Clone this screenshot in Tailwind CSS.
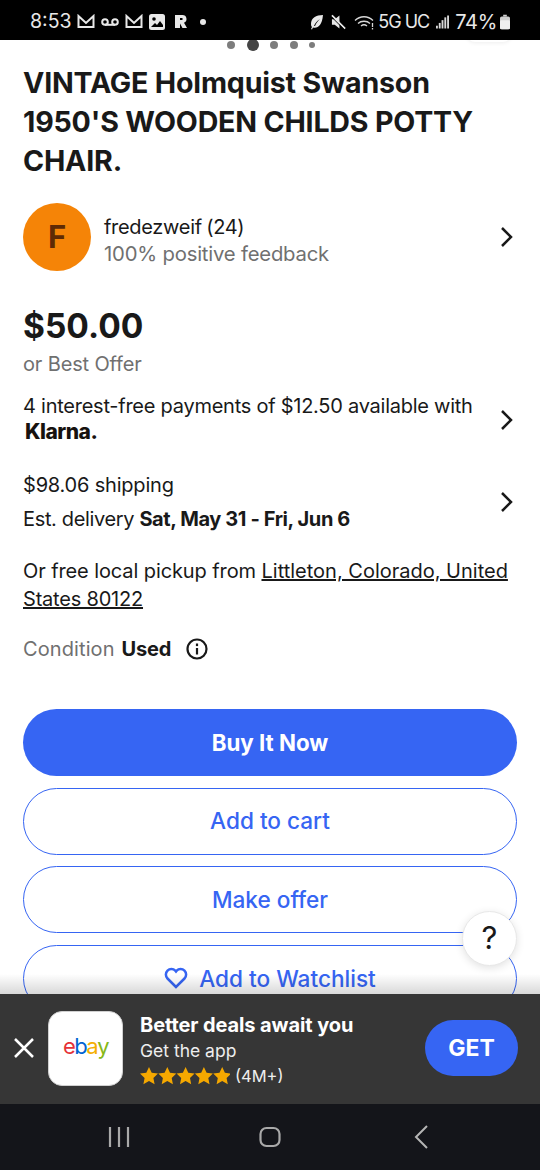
<!DOCTYPE html>
<html lang="en">
<head>
  <meta charset="UTF-8">
  <title>eBay listing</title>
  <script src="https://cdn.jsdelivr.net/npm/@tailwindcss/browser@4"></script>
</head>
<body class="bg-white">
<div class="w-[540px] h-[1170px] overflow-hidden flex flex-col font-['Inter','Liberation_Sans',sans-serif] text-[#191919]">

  <!-- Status bar -->
  <div class="relative z-10 h-[40px] shrink-0 bg-black text-[#e8e8e8] flex items-center pt-[3px] pl-[30px] pr-[30px] text-[20px]">
    <span class="w-[47px] text-[19.500px]">8:53</span>
    <div class="flex items-center gap-[6px]">
      <svg width="18" height="15" viewBox="0 0 18 15" fill="none" stroke="#e8e8e8" stroke-width="2"><path d="M1.500 13V2L9 9l7.500-7v11z"/></svg>
      <svg width="18" height="10" viewBox="0 0 18 10" fill="none" stroke="#e8e8e8" stroke-width="2"><circle cx="4" cy="5" r="2.800"/><circle cx="14" cy="5" r="2.800"/><path d="M4 7.800h10"/></svg>
      <svg width="18" height="15" viewBox="0 0 18 15" fill="none" stroke="#e8e8e8" stroke-width="2"><path d="M1.500 13V2L9 9l7.500-7v11z"/></svg>
      <svg width="16" height="16" viewBox="0 0 16 16"><rect width="16" height="16" rx="2.500" fill="#e8e8e8"/><circle cx="5" cy="5" r="1.800" fill="#000"/><path d="M2 13l4-4 2 2 3-4 3 4v2H2z" fill="#000"/></svg>
      <svg class="ml-[3px]" width="14" height="15" viewBox="0 0 14 15"><path d="M1 1h7.500a4 4 0 0 1 1.500 7.700L13 14H8.500L6 9.500V14H1z" fill="#e8e8e8"/><rect x="6" y="4" width="2.500" height="2" fill="#000"/></svg>
      <span class="ml-[6px] w-[6px] h-[6px] rounded-full bg-[#e8e8e8]"></span>
    </div>
    <div class="ml-auto flex items-center">
      <svg width="14" height="16" viewBox="0 0 14 16"><path d="M13 1C6 1 1 4 1 10c0 1.500.5 2.500 1 3l-1 2 1 .5 1-2c5 1 9-2 10-12.500zM4 12c1-3 3-5 6-7-2 2-4 4-5 7z" fill="#e8e8e8" fill-rule="evenodd"/></svg>
      <svg class="ml-[7px]" width="15" height="16" viewBox="0 0 16 16"><path d="M1 5h3l5-4v14l-5-4H1z" fill="#e8e8e8"/><path d="M1 1l14 14" stroke="#e8e8e8" stroke-width="2"/><path d="M0 2l14 14" stroke="#000" stroke-width="1"/></svg>
      <svg class="ml-[8px]" width="20" height="16" viewBox="0 0 20 16" fill="none" stroke="#d8d8d8" stroke-width="1.300"><path d="M1 6.500C6 1.500 14 1.500 19 6.500"/><path d="M4 9.500c3-3 9-3 12 0"/><path d="M7 12c1.800-1.500 4.200-1.500 6 0"/><path d="M18.500 9v4M18.500 14v1.500"/></svg>
      <span class="ml-[4px] text-[18px] tracking-[-1px]">5G</span>
      <span class="ml-[4px] text-[18px] tracking-[-1px]">UC</span>
      <svg class="ml-[7px]" width="13" height="14" viewBox="0 0 14 14" fill="#d8d8d8"><rect x="0" y="11" width="2" height="3"/><rect x="3" y="8" width="2" height="6"/><rect x="6" y="5" width="2" height="9"/><rect x="9" y="2" width="2" height="12"/><rect x="12" y="0" width="2" height="14"/></svg>
      <span class="ml-[6px] tracking-[-0.3px]">74%</span>
      <svg class="ml-[3px]" width="10" height="16" viewBox="0 0 11 16"><rect x="3.500" y="0" width="4" height="2" fill="#cfcfcf"/><rect x="0" y="2" width="11" height="14" rx="2" fill="#cfcfcf"/><rect x="0" y="6" width="11" height="10" rx="1.500" fill="#efefef"/></svg>
    </div>
  </div>

  <!-- Listing -->
  <div class="relative flex-1 min-h-0 overflow-hidden px-[23px]">
    <!-- shadow of a button that has scrolled under the status bar -->
    <div class="absolute left-[467px] top-[-14px] w-[44px] h-[16px] rounded-full shadow-[0_1px_4px_rgba(0,0,0,0.07)]"></div>

    <div class="flex justify-center items-center gap-[11.500px] h-[10px] mb-[1px] pl-[2px]">
      <span class="w-[8px] h-[8px] rounded-full bg-[#7d7d7d]"></span>
      <span class="w-[12px] h-[12px] rounded-full bg-[#444]"></span>
      <span class="w-[8px] h-[8px] rounded-full bg-[#7d7d7d]"></span>
      <span class="w-[8px] h-[8px] rounded-full bg-[#7d7d7d]"></span>
      <span class="w-[6px] h-[6px] rounded-full bg-[#7d7d7d]"></span>
    </div>

    <h1 class="mt-[13px] text-[28.600px] leading-[39px] font-bold tracking-[-0.2px]">VINTAGE Holmquist Swanson 1950'S WOODEN CHILDS POTTY CHAIR.</h1>

    <div class="mt-[23px] flex items-center">
      <div class="w-[68px] h-[68px] rounded-full bg-[#f58407] text-[#5e2a05] flex items-center justify-center text-[31px] font-bold">F</div>
      <div class="ml-[13px] pt-[6px] text-[20.300px] tracking-[-0.2px]">
        <div class="text-[20px] leading-[27px] tracking-[-0.300px] [word-spacing:-1px]">fredezweif (24)</div>
        <div class="leading-[26px] text-[#707070]">100% positive feedback</div>
      </div>
      <svg class="ml-auto mr-[3px]" width="14" height="22" viewBox="0 0 14 22" fill="none" stroke="#191919" stroke-width="2.500"><path d="M2 2l9 9-9 9"/></svg>
    </div>

    <div class="mt-[32px] text-[33.500px] leading-[46px] font-bold">$50.00</div>
    <div class="mt-[1px] text-[20px] leading-[28px] text-[#707070] tracking-[-0.150px]">or Best Offer</div>

    <div class="mt-[14px] flex items-center">
      <div>
        <div class="text-[20px] leading-[28px] tracking-[-0.250px]">4 interest-free payments of $12.50 available with</div>
        <div class="mt-[-2px] pl-[2px] text-[21px] leading-[28px] font-extrabold tracking-[-0.5px] text-[#17120f]">Klarna.</div>
      </div>
      <svg class="ml-auto mr-[3px] mt-[2px]" width="14" height="22" viewBox="0 0 14 22" fill="none" stroke="#191919" stroke-width="2.500"><path d="M2 2l9 9-9 9"/></svg>
    </div>

    <div class="mt-[25px] flex items-center">
      <div class="text-[20px] tracking-[-0.2px]">
        <div class="leading-[28px]">$98.06 shipping</div>
        <div class="mt-[6px] leading-[28px] tracking-[-0.350px]">Est. delivery <span class="font-bold tracking-[-0.400px]">Sat, May 31 - Fri, Jun 6</span></div>
      </div>
      <svg class="ml-auto mr-[3px]" width="14" height="22" viewBox="0 0 14 22" fill="none" stroke="#191919" stroke-width="2.500"><path d="M2 2l9 9-9 9"/></svg>
    </div>

    <div class="mt-[24px] text-[20px] leading-[28px] tracking-[-0.100px]">
      <div>Or free local pickup from <span class="underline tracking-[0px]">Littleton, Colorado, United</span></div>
      <div><span class="underline tracking-[-0.2px]">States 80122</span></div>
    </div>

    <div class="mt-[22px] flex items-center text-[20px] leading-[28px]">
      <span class="text-[#707070] tracking-[0.100px]">Condition</span>
      <span class="ml-[7px] font-bold tracking-[-0.2px]">Used</span>
      <svg class="ml-[15px]" width="22" height="22" viewBox="0 0 22 22" fill="none" stroke="#191919" stroke-width="2.200"><circle cx="11" cy="11" r="9.500"/><path d="M11 10v6.500"/><path d="M11 5.500v2.600"/></svg>
    </div>

    <div class="mt-[46px] flex flex-col gap-[11.670px] text-[22.600px] text-[#3665f3]">
      <div class="h-[67px] shrink-0 rounded-full bg-[#3665f3] text-white text-[22.300px] font-bold flex items-center justify-center">Buy It Now</div>
      <div class="h-[67px] shrink-0 rounded-full border border-[#3665f3] font-medium flex items-center justify-center">Add to cart</div>
      <div class="h-[67px] shrink-0 rounded-full border border-[#3665f3] font-medium flex items-center justify-center">Make offer</div>
      <div class="h-[67px] shrink-0 rounded-full border border-[#3665f3] font-medium flex items-center justify-center gap-[11px]">
        <svg width="24" height="22" viewBox="0 0 24 22" fill="none" stroke="#3665f3" stroke-width="2.500"><path d="M12 20L3.500 11.500a5.500 5.500 0 0 1 7.800-7.800l.7.800.7-.8a5.500 5.500 0 0 1 7.800 7.800z"/></svg>
        Add to Watchlist
      </div>
    </div>

    <!-- Floating help button -->
    <div class="absolute left-[462px] top-[871px] w-[55px] h-[55px] rounded-full bg-white border border-[#e8e8e8] shadow-[0_2px_8px_rgba(0,0,0,0.12)] flex items-center justify-center text-[31px] text-[#191919]">?</div>
    <div class="absolute left-0 right-0 bottom-0 h-[20px] bg-gradient-to-b from-transparent to-black/15"></div>
  </div>

  <!-- App banner -->
  <div class="h-[110px] shrink-0 bg-[#363636] flex items-center pb-[2px] text-white">
    <svg class="ml-[14px]" width="20" height="20" viewBox="0 0 20 20" fill="none" stroke="#fff" stroke-width="2.500"><path d="M1 1l18 18M19 1L1 19"/></svg>
    <div class="ml-[14px] w-[75px] h-[75px] pb-[3px] rounded-[14px] bg-white border border-[#d0d0d0] flex items-center justify-center text-[22px] tracking-[-1.500px]">
      <span class="text-[#e53238]">e</span><span class="text-[#0064d2]">b</span><span class="text-[#f5af02]">a</span><span class="text-[#86b817]">y</span>
    </div>
    <div class="ml-[17px] pt-[4px]">
      <div class="text-[20px] leading-[27px] font-bold tracking-[-0.1px]">Better deals await you</div>
      <div class="text-[17.500px] leading-[24px] text-[#eeeeee]">Get the app</div>
      <div class="flex items-center text-[16.500px] leading-[26px] text-[#eeeeee]">
        <svg width="90" height="18" viewBox="0 0 90 18" fill="#f5a800">
          <path id="s" d="M9 0l2.700 5.800 6.300.8-4.600 4.300 1.200 6.300L9 14.100l-5.600 3.100 1.200-6.300L0 6.600l6.300-.8z"/>
          <use href="#s" x="18.300"/><use href="#s" x="36.600"/><use href="#s" x="54.900"/><use href="#s" x="73.200"/>
        </svg>
        <span class="ml-[5px]">(4M+)</span>
      </div>
    </div>
    <div class="ml-auto mr-[22px] w-[93px] h-[56px] rounded-full bg-[#3665f3] flex items-center justify-center text-[23px] font-bold">GET</div>
  </div>

  <!-- Android nav -->
  <div class="h-[66px] shrink-0 bg-[#14151a] flex items-center">
    <svg class="ml-[108px]" width="22" height="22" viewBox="0 0 22 22" stroke="#a9a9a9" stroke-width="2.200"><path d="M2 1v20M11 1v20M20 1v20"/></svg>
    <svg class="ml-[129px]" width="22" height="22" viewBox="0 0 22 22" fill="none" stroke="#a9a9a9" stroke-width="2.200"><rect x="1.500" y="2" width="19" height="18" rx="6"/></svg>
    <svg class="ml-[132px]" width="16" height="24" viewBox="0 0 16 24" fill="none" stroke="#b5b5b5" stroke-width="2"><path d="M14 1L3 12l11 11"/></svg>
  </div>
</div>
</body>
</html>
